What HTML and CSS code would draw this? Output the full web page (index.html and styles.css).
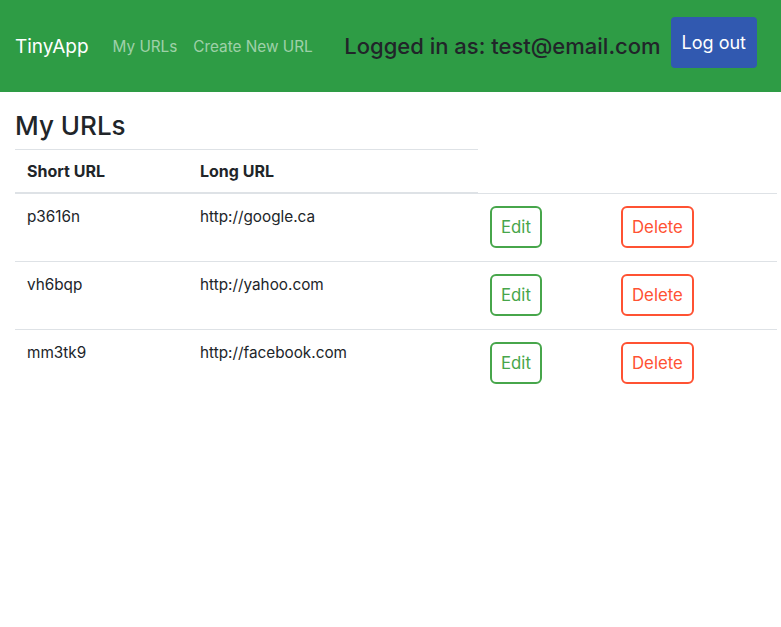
FILE: index.html
```html
<!DOCTYPE html>
<html lang="en">
<head>
<meta charset="utf-8">
<title>TinyApp</title>
<link rel="stylesheet" href="styles.css">
</head>
<body>
<header class="navbar">
  <a class="brand" href="#">TinyApp</a>
  <nav class="nav">
    <a class="nav-link" href="#">My URLs</a>
    <a class="nav-link" href="#">Create New URL</a>
  </nav>
  <div class="user">
    <span class="logged">Logged in as: test@email.com</span>
    <button class="btn-logout" type="button">Log out</button>
  </div>
</header>
<main class="container">
  <h3 class="title">My URLs</h3>
  <table class="table">
    <thead>
      <tr>
        <th class="c-short">Short URL</th>
        <th class="c-long">Long URL</th>
      </tr>
    </thead>
    <tbody>
      <tr>
        <td class="text">p3616n</td>
        <td class="text">http://google.ca</td>
        <td class="action c-edit"><a class="btn btn-edit" href="#">Edit</a></td>
        <td class="action"><button class="btn btn-delete" type="button">Delete</button></td>
      </tr>
      <tr>
        <td class="text">vh6bqp</td>
        <td class="text">http://yahoo.com</td>
        <td class="action c-edit"><a class="btn btn-edit" href="#">Edit</a></td>
        <td class="action"><button class="btn btn-delete" type="button">Delete</button></td>
      </tr>
      <tr>
        <td class="text">mm3tk9</td>
        <td class="text">http://facebook.com</td>
        <td class="action c-edit"><a class="btn btn-edit" href="#">Edit</a></td>
        <td class="action"><button class="btn btn-delete" type="button">Delete</button></td>
      </tr>
    </tbody>
  </table>
</main>
</body>
</html>
```
FILE: styles.css
```css
* { box-sizing: border-box; }
body {
  margin: 0;
  font-family: Inter, "Noto Sans", "DejaVu Sans", sans-serif;
  color: #212529;
  background: #fff;
}
.navbar {
  height: 92px;
  background: #2e9c45;
  display: flex;
  align-items: center;
  padding: 0 24px 0 15px;
}
.brand {
  font-size: 19px;
  color: #fff;
  text-decoration: none;
  margin-right: 16px;
}
.nav { display: flex; }
.nav-link {
  font-size: 15.3px;
  color: rgba(255, 255, 255, 0.55);
  text-decoration: none;
  padding: 0 8px;
}
.user {
  margin-left: auto;
  display: flex;
  align-items: center;
  gap: 10px;
}
.logged {
  font-size: 22px;
  font-weight: 500;
  color: #212529;
}
.btn-logout {
  font-family: inherit;
  font-size: 18px;
  line-height: 27px;
  color: #fff;
  background: #3159b0;
  border: 0;
  border-radius: 4px;
  padding: 12px 11px;
  margin-bottom: 7px;
}
.container { padding: 0 0 0 15px; }
.title {
  font-size: 26px;
  font-weight: 500;
  line-height: 1.2;
  margin: 18px 0 8px;
}
.table {
  width: 762px;
  border-collapse: collapse;
  font-size: 15.3px;
  line-height: 22px;
}
.table th {
  text-align: left;
  font-size: 16px;
  font-weight: 700;
  padding: 10px 12px;
  border-top: 1px solid #dee2e6;
  border-bottom: 2px solid #dee2e6;
}
.c-short { width: 173px; }
.c-long { width: 290px; }
.c-edit { width: 131px; }
.table td {
  vertical-align: top;
  border-top: 1px solid #dee2e6;
  padding: 12px;
}
.table td.action { padding-bottom: 13px; }
.btn {
  display: inline-block;
  vertical-align: top;
  font-family: inherit;
  font-size: 16.8px;
  line-height: 24px;
  padding: 7px 9px;
  background: #fff;
  border: 2px solid;
  border-radius: 6px;
  text-decoration: none;
}
.btn-edit { color: #47a64b; border-color: #47a64b; }
.btn-delete { color: #ff5233; border-color: #ff5233; }
```
